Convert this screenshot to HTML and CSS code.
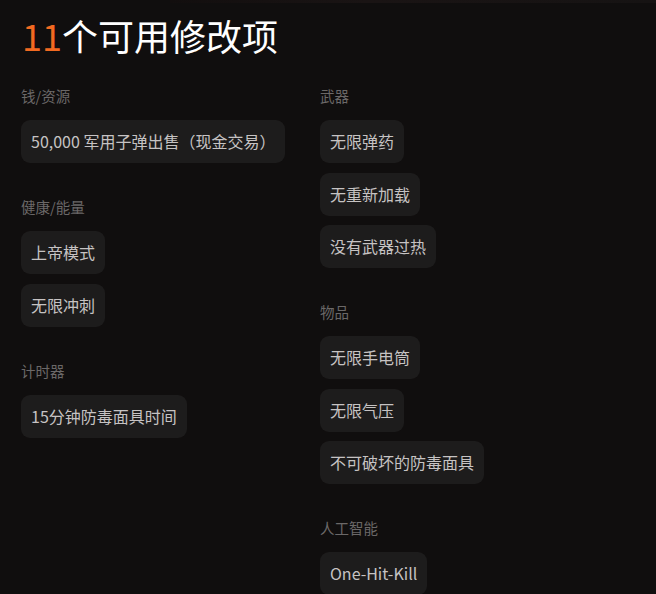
FILE: index.html
```html
<!DOCTYPE html>
<html lang="zh-CN">
<head>
  <meta charset="UTF-8" />
  <meta name="viewport" content="width=device-width, initial-scale=1.0"/>
  <title>可用修改项</title>
  <link rel="stylesheet" href="styles.css">
</head>
<body>
  <div class="top-glow"></div>
  <div class="container">
    <h1 class="title"><span class="count">11</span>个可用修改项</h1>

    <div class="columns">
      <div class="column">
        <div class="group">
          <h2 class="group-title">钱/资源</h2>
          <div class="chip">50,000 军用子弹出售（现金交易）</div>
        </div>
        <div class="group">
          <h2 class="group-title">健康/能量</h2>
          <div class="chip">上帝模式</div>
          <div class="chip">无限冲刺</div>
        </div>
        <div class="group">
          <h2 class="group-title">计时器</h2>
          <div class="chip">15分钟防毒面具时间</div>
        </div>
      </div>

      <div class="column">
        <div class="group">
          <h2 class="group-title">武器</h2>
          <div class="chip">无限弹药</div>
          <div class="chip">无重新加载</div>
          <div class="chip">没有武器过热</div>
        </div>
        <div class="group">
          <h2 class="group-title">物品</h2>
          <div class="chip">无限手电筒</div>
          <div class="chip">无限气压</div>
          <div class="chip">不可破坏的防毒面具</div>
        </div>
        <div class="group">
          <h2 class="group-title">人工智能</h2>
          <div class="chip">One-Hit-Kill</div>
        </div>
      </div>
    </div>
  </div>
</body>
</html>
```

FILE: styles.css
```css
* {
  box-sizing: border-box;
}

html, body {
  margin: 0;
  padding: 0;
  background: #100e0e;
  font-family: "Noto Sans CJK SC", "Noto Sans", sans-serif;
  color: #c8c6c6;
  min-height: 100vh;
}

.top-glow {
  height: 3px;
  margin-left: 170px;
  background: linear-gradient(to right, #120e0e, #1a1414 40%, #161313);
}

.container {
  padding: 8px 21px 0;
}

.title {
  margin: 0 0 27px 1px;
  font-size: 36px;
  font-weight: 400;
  line-height: 48px;
  color: #ffffff;
}

.count {
  color: #f26a21;
}

.columns {
  display: grid;
  grid-template-columns: 299px 1fr;
}

.column {
  display: flex;
  flex-direction: column;
  gap: 34px;
}

.group {
  display: flex;
  flex-direction: column;
  align-items: flex-start;
  gap: 9.5px;
}

.group-title {
  margin: 0 0 4.5px;
  font-size: 14.5px;
  font-weight: 400;
  line-height: 20px;
  color: #6b6868;
}

.chip {
  background: #1d1c1c;
  border-radius: 9px;
  padding: 10px 10px;
  font-size: 16px;
  line-height: 23px;
  color: #c6c3c3;
}
```
